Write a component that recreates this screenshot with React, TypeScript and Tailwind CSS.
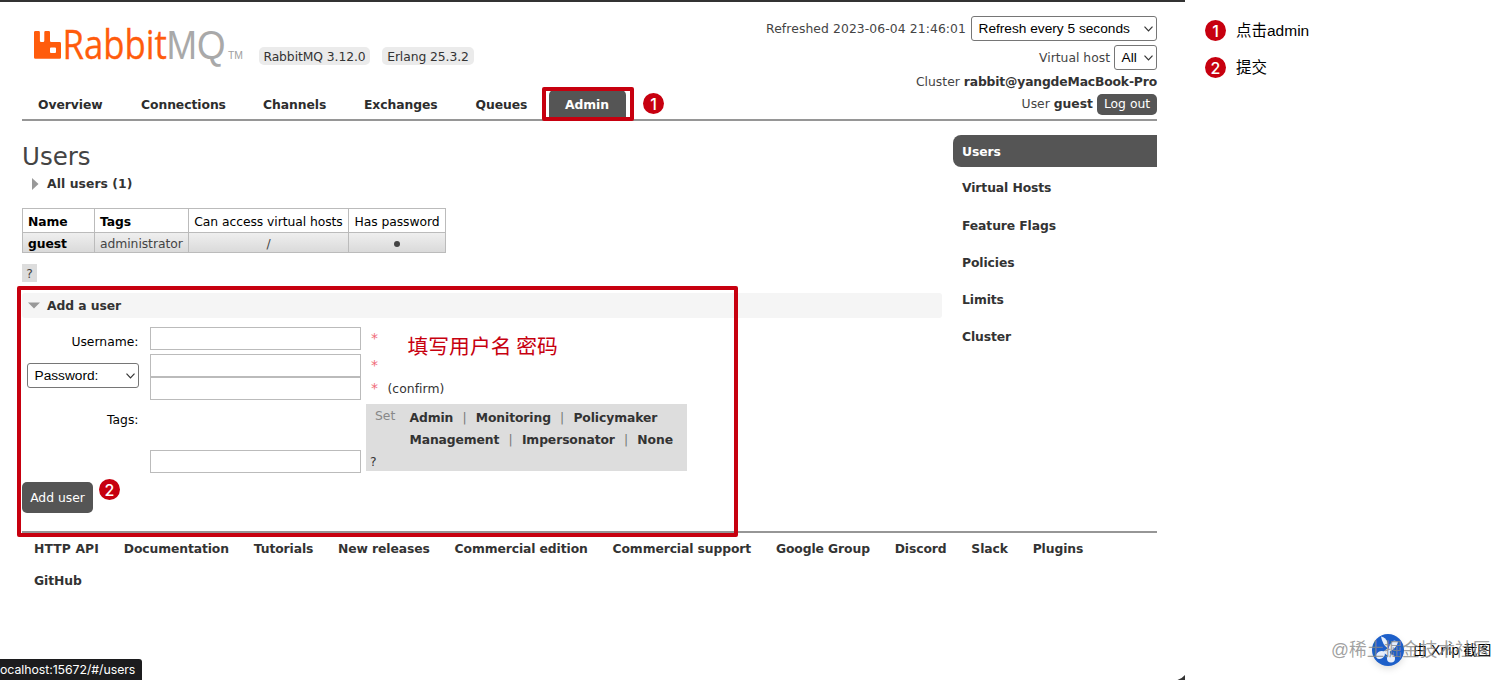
import * as React from "react"
import clsx from "clsx"

const TABS = [
  { name: "Overview", width: "w-[103px]" },
  { name: "Connections", width: "w-[122px]" },
  { name: "Channels", width: "w-[101px]" },
  { name: "Exchanges", width: "w-[111.5px]" },
  { name: "Queues", width: "w-[73px]" }
]

const SIDE_MENU = ["Users", "Virtual Hosts", "Feature Flags", "Policies", "Limits", "Cluster"]

const FOOTER_LINKS = [
  "HTTP API",
  "Documentation",
  "Tutorials",
  "New releases",
  "Commercial edition",
  "Commercial support",
  "Google Group",
  "Discord",
  "Slack",
  "Plugins",
  "GitHub"
]

const TAG_ROWS = [
  ["Admin", "Monitoring", "Policymaker"],
  ["Management", "Impersonator", "None"]
]

function Logo() {
  return (
    <svg width="212" height="34" viewBox="0 0 212 34" className="shrink-0 overflow-visible">
      <path
        fill="#ff5c0c"
        d="M1.5 2h3.2q1.2 0 1.2 1.2v8.6q0 1.2 1.2 1.2h2q1.2 0 1.2-1.2V3.2q0-1.2 1.2-1.2h3.3q1.2 0 1.2 1.2v8.6q0 1.2 1.2 1.2h8.4q1.4 0 1.4 1.4v14q0 1.4-1.4 1.4H1.4Q0 29.8 0 28.4V3.2Q0 2 1.5 2zM17 18.5q-1 0-1 1v3.5q0 1 1 1h4q1 0 1-1v-3.5q0-1-1-1z"
        fillRule="evenodd"
      />
      <text x="28.5" y="30" fontFamily="Open Sans, Noto Sans, sans-serif" fontSize="39.5" fill="#ff5c0c" stroke="#ff5c0c" strokeWidth="0.3" textLength="104.5" lengthAdjust="spacingAndGlyphs">Rabbit</text>
      <text x="132.5" y="30" fontFamily="Liberation Sans, sans-serif" fontSize="40" fill="#a9a9a9" textLength="59" lengthAdjust="spacingAndGlyphs">MQ</text>
      <text x="194" y="30" fontFamily="Liberation Sans, sans-serif" fontSize="10.5" fill="#a0a0a0" textLength="15" lengthAdjust="spacingAndGlyphs">TM</text>
    </svg>
  )
}

function Chevron() {
  return (
    <svg width="9" height="6" viewBox="0 0 9 6" fill="none" stroke="#333" strokeWidth="1.2" className="shrink-0">
      <path d="M0.5 0.7L4.5 4.8L8.5 0.7" />
    </svg>
  )
}

function Select({ label, className }: { label: string; className?: string }) {
  return (
    <button
      className={clsx(
        "flex items-center justify-between rounded-[3px] border border-[#767676] bg-white pl-[6.5px] pr-[3px] font-['Liberation_Sans',Arial,sans-serif] text-[13.7px] text-black whitespace-nowrap",
        className
      )}
    >
      <span>{label}</span>
      <Chevron />
    </button>
  )
}

function Badge({ n, className }: { n: number; className?: string }) {
  return (
    <span className={clsx("flex h-[21px] w-[21px] items-center justify-center rounded-full bg-[#c7000f] font-[Inter,sans-serif] text-[16px] font-medium leading-none text-white", className)}>
      {n}
    </span>
  )
}

function TextInput({ className }: { className?: string }) {
  return <input className={clsx("block h-[23px] w-[211px] border border-[#bbb] bg-white", className)} />
}

function Required() {
  return <span className="w-[14px] text-[14px] text-[#f06a78]">*</span>
}

function Header() {
  return (
    <header className="flex h-[119px] justify-between border-b-2 border-[#969696]">
      <div className="flex flex-col">
        <div className="flex h-[87px] items-start pl-3 pt-[27px]">
          <Logo />
          <div className="flex gap-3 pl-[13px] pt-[18px] tracking-[-0.08px] text-[#333]">
            <span className="flex h-[18px] w-[111px] items-center justify-center rounded-[5px] bg-[#ebebeb] pt-px">RabbitMQ 3.12.0</span>
            <span className="flex h-[18px] w-[92px] items-center justify-center rounded-[5px] bg-[#ebebeb] pt-px">Erlang 25.3.2</span>
          </div>
        </div>
        <nav className="flex h-[30px] items-center pl-4 font-bold tracking-[-0.06px] text-[#2d2d2d]">
          {TABS.map((tab) => (
            <a key={tab.name} className={clsx("pt-px", tab.width)}>{tab.name}</a>
          ))}
          <a className="flex h-[28px] w-[77px] items-center justify-center rounded-t-[5px] bg-[#555] pt-px text-white">Admin</a>
        </nav>
      </div>
      <div className="flex flex-col items-end pt-[14px]">
        <div className="flex h-[25px] items-center gap-[5px]">
          <span className="tracking-[0.1px]">Refreshed 2023-06-04 21:46:01</span>
          <Select label="Refresh every 5 seconds" className="h-[25px] w-[186px]" />
        </div>
        <div className="mt-1 flex h-[25px] items-center gap-1">
          <span>Virtual host</span>
          <Select label="All" className="h-[25px] w-[43px]" />
        </div>
        <div className="mt-[2px] flex h-5 items-center gap-1">
          <span>Cluster</span>
          <b className="tracking-[-0.16px] text-[#333]">rabbit@yangdeMacBook-Pro</b>
        </div>
        <div className="mt-px flex h-[22px] items-center gap-1">
          <span>User</span>
          <b className="text-[#333]">guest</b>
          <button className="h-[21px] w-[60px] rounded-[5px] bg-[#555] text-white">Log out</button>
        </div>
      </div>
    </header>
  )
}

function UsersTable() {
  return (
    <table className="mt-[12px] w-[424px] table-fixed border-collapse tracking-[-0.06px] text-black">
      <thead>
        <tr className="h-6">
          <th className="w-[72px] border border-[#bbb] px-[5px] pt-[2px] text-left">Name</th>
          <th className="w-[94px] border border-[#bbb] px-[5px] pt-[2px] text-left">Tags</th>
          <th className="w-[160px] border border-[#bbb] pt-[2px] font-normal whitespace-nowrap">Can access virtual hosts</th>
          <th className="border border-[#bbb] pt-[2px] font-normal whitespace-nowrap">Has password</th>
        </tr>
      </thead>
      <tbody>
        <tr className="h-5 bg-linear-to-b from-[#efefef] to-[#d9d9d9] text-[#444]">
          <td className="border border-[#bbb] px-[5px] pt-[2px] font-bold text-black">guest</td>
          <td className="border border-[#bbb] px-[5px] pt-[2px]">administrator</td>
          <td className="border border-[#bbb] pt-[2px] text-center">/</td>
          <td className="border border-[#bbb] pt-[2px]">
            <div className="mx-auto h-[6px] w-[6px] rounded-full bg-[#444]" />
          </td>
        </tr>
      </tbody>
    </table>
  )
}

function AddUserForm() {
  return (
    <section className="relative mt-[11px] h-[238px]">
      <h2 className="flex h-[25px] items-center rounded-[3px] bg-[#f5f5f5] pl-[6px] font-bold tracking-[-0.08px] text-[#333]">
        <svg width="12" height="7" viewBox="0 0 12 7" className="mr-[7px]">
          <path d="M0 0.5h12L6 6.5z" fill="#999" />
        </svg>
        Add a user
      </h2>
      <div className="flex h-[153px] pt-[9px]">
        <div className="flex w-[117px] flex-col items-end text-black">
          <span className="mt-[7px] h-4 pr-[0.5px] leading-4">Username:</span>
          <Select label="Password:" className="mt-[13px] h-[25px] w-[112px]" />
          <span className="mt-[24px] h-4 pr-[0.5px] leading-4">Tags:</span>
        </div>
        <div className="ml-[11px] w-[211px]">
          <TextInput />
          <TextInput className="mt-[4px]" />
          <TextInput />
          <TextInput className="mt-[50px]" />
        </div>
        <div className="ml-[5px] text-[#333]">
          <div className="h-[27px] pl-[5px] leading-[23px]"><Required /></div>
          <div className="h-[23px] pl-[5px] leading-[23px]"><Required /></div>
          <div className="flex h-[27px] pl-[5px] leading-[23px]">
            <Required />
            <span className="pl-[2.5px] pt-px tracking-[0.05px]">(confirm)</span>
          </div>
          <div className="flex h-[67px] w-[321px] bg-[#ddd] pt-[3px]">
            <div className="w-[43.5px] text-[#888]">
              <div className="h-[44px] pl-[9px] leading-[18px]">Set</div>
              <div className="pl-1 leading-[22px] text-[#333]">?</div>
            </div>
            <div className="tracking-[-0.1px]">
              {TAG_ROWS.map((row) => (
                <div key={row[0]} className="flex h-[22px] items-center">
                  {row.map((tag, i) => (
                    <React.Fragment key={tag}>
                      {i > 0 && <span className="w-[22.5px] text-center text-[#777]">|</span>}
                      <b>{tag}</b>
                    </React.Fragment>
                  ))}
                </div>
              ))}
            </div>
          </div>
        </div>
      </div>
      <button className="mt-[11px] block h-[31px] w-[71px] rounded-[5px] bg-[#555] text-white">Add user</button>
      <Badge n={2} className="absolute left-[77px] top-[186px]" />
      <div className="absolute left-[385.5px] top-[37px] font-['Noto_Sans_CJK_SC',sans-serif] text-[20.8px] leading-[30px] text-[#c7000f] whitespace-nowrap">填写用户名 密码</div>
      <div className="absolute -left-[5px] -top-[7px] h-[251px] w-[721px] rounded-[2px] border-4 border-[#c7000f]" />
    </section>
  )
}

function XnipMark() {
  return (
    <div className="absolute bottom-0 right-0 h-[70px] w-[202px] text-black">
      <svg width="40" height="40" viewBox="0 0 40 40" className="absolute left-[58px] top-[20px] drop-shadow-md">
        <circle cx="20" cy="20" r="16" fill="#1d5fc9" />
        <g fill="#e6eefb">
          <path d="M13 6.5Q18 7.5 19.5 12.5L20 18.5Q14.5 15 13 6.5z" />
          <path d="M30 11.5Q29.5 17.5 20.5 22.5Q20 14.5 26 10.5z" />
          <ellipse cx="12.5" cy="25" rx="4.8" ry="3.6" transform="rotate(-35 12.5 25)" />
          <circle cx="23" cy="28.5" r="4" />
          <path d="M15 22l5-4 3 7-3 1z" />
        </g>
      </svg>
      <div className="absolute left-[103px] top-[28px] font-['Liberation_Sans','Noto_Sans_CJK_SC',sans-serif] text-[14.1px] leading-6 whitespace-nowrap">由 Xnip 截图</div>
      <div className="absolute left-[21px] top-[28px] font-['Liberation_Sans','Noto_Sans_CJK_SC',sans-serif] text-[17.7px] leading-6 text-[#888]/80 whitespace-nowrap">@稀土掘金技术社区</div>
    </div>
  )
}

export default function App() {
  return (
    <div className="relative flex h-[680px] w-[1512px] overflow-hidden bg-white font-['DejaVu_Sans',Verdana,'Noto_Sans_CJK_SC',sans-serif] text-[12.35px] leading-4 text-[#444]">
      <div className="h-full w-[1185px] border-t-2 border-[#333] pl-[22px] pr-7">
        <Header />
        <div className="flex h-[410px] justify-between">
          <main className="w-[920px]">
            <h1 className="pt-[21px] text-[24.5px] leading-[30px]">Users</h1>
            <div className="mt-[4px] flex h-[16px] items-center pl-[10px] font-bold tracking-[0.08px] text-[#333]">
              <svg width="7" height="12" viewBox="0 0 7 12" className="mr-2">
                <path d="M0 0v12L6.5 6z" fill="#999" />
              </svg>
              All users (1)
            </div>
            <div className="pt-1">
              <UsersTable />
            </div>
            <div className="mt-[11px] h-[18px] w-[15px] bg-[#ddd] text-center leading-[20px]">?</div>
            <AddUserForm />
          </main>
          <aside className="mt-[14px] flex w-[204px] flex-col gap-[5.2px] font-bold tracking-[-0.1px] text-[#333]">
            {SIDE_MENU.map((item) => (
              <a key={item} className={clsx("flex h-8 items-center pl-[9px]", item === "Users" ? "rounded-l-[8px] bg-[#555] pt-px text-white" : "pt-[0.5px]")}>{item}</a>
            ))}
          </aside>
        </div>
        <footer className="flex flex-wrap gap-x-[24.8px] gap-y-4 border-t-2 border-[#969696] pl-3 pr-8 pt-2 font-bold tracking-[-0.1px] text-[#333]">
          {FOOTER_LINKS.map((link) => (
            <a key={link} className={clsx(link === "HTTP API" && "tracking-[0.12px]")}>{link}</a>
          ))}
        </footer>
      </div>

      {/* Annotation legend */}
      <div className="flex flex-col gap-3 pl-[20px] pt-[18px] font-['Liberation_Sans','Noto_Sans_CJK_SC',sans-serif] text-[15.5px] leading-6 text-black">
        <div className="flex items-center gap-[10px]">
          <Badge n={1} />
          <span className="pt-px">点击admin</span>
        </div>
        <div className="flex items-center gap-[10px]">
          <Badge n={2} />
          <span className="pt-px">提交</span>
        </div>
      </div>

      <div className="absolute left-[542px] top-[87px] h-[34px] w-[92px] rounded-[2px] border-4 border-[#c7000f]" />
      <Badge n={1} className="absolute left-[643px] top-[93px]" />

      {/* Browser link status */}
      <div className="absolute bottom-0 left-0 h-[21px] w-[142px] rounded-tr-[3px] bg-[#1c1c1e] font-[Inter,sans-serif] text-[12.3px] leading-[21px] tracking-[-0.05px] text-white">ocalhost:15672/#/users</div>
      <svg width="8" height="5" viewBox="0 0 8 5" className="absolute bottom-0 left-[1177px]">
        <path d="M8 0v5H0.5Q5 3.500 8 0z" fill="#333" />
      </svg>
      <XnipMark />
    </div>
  )
}
